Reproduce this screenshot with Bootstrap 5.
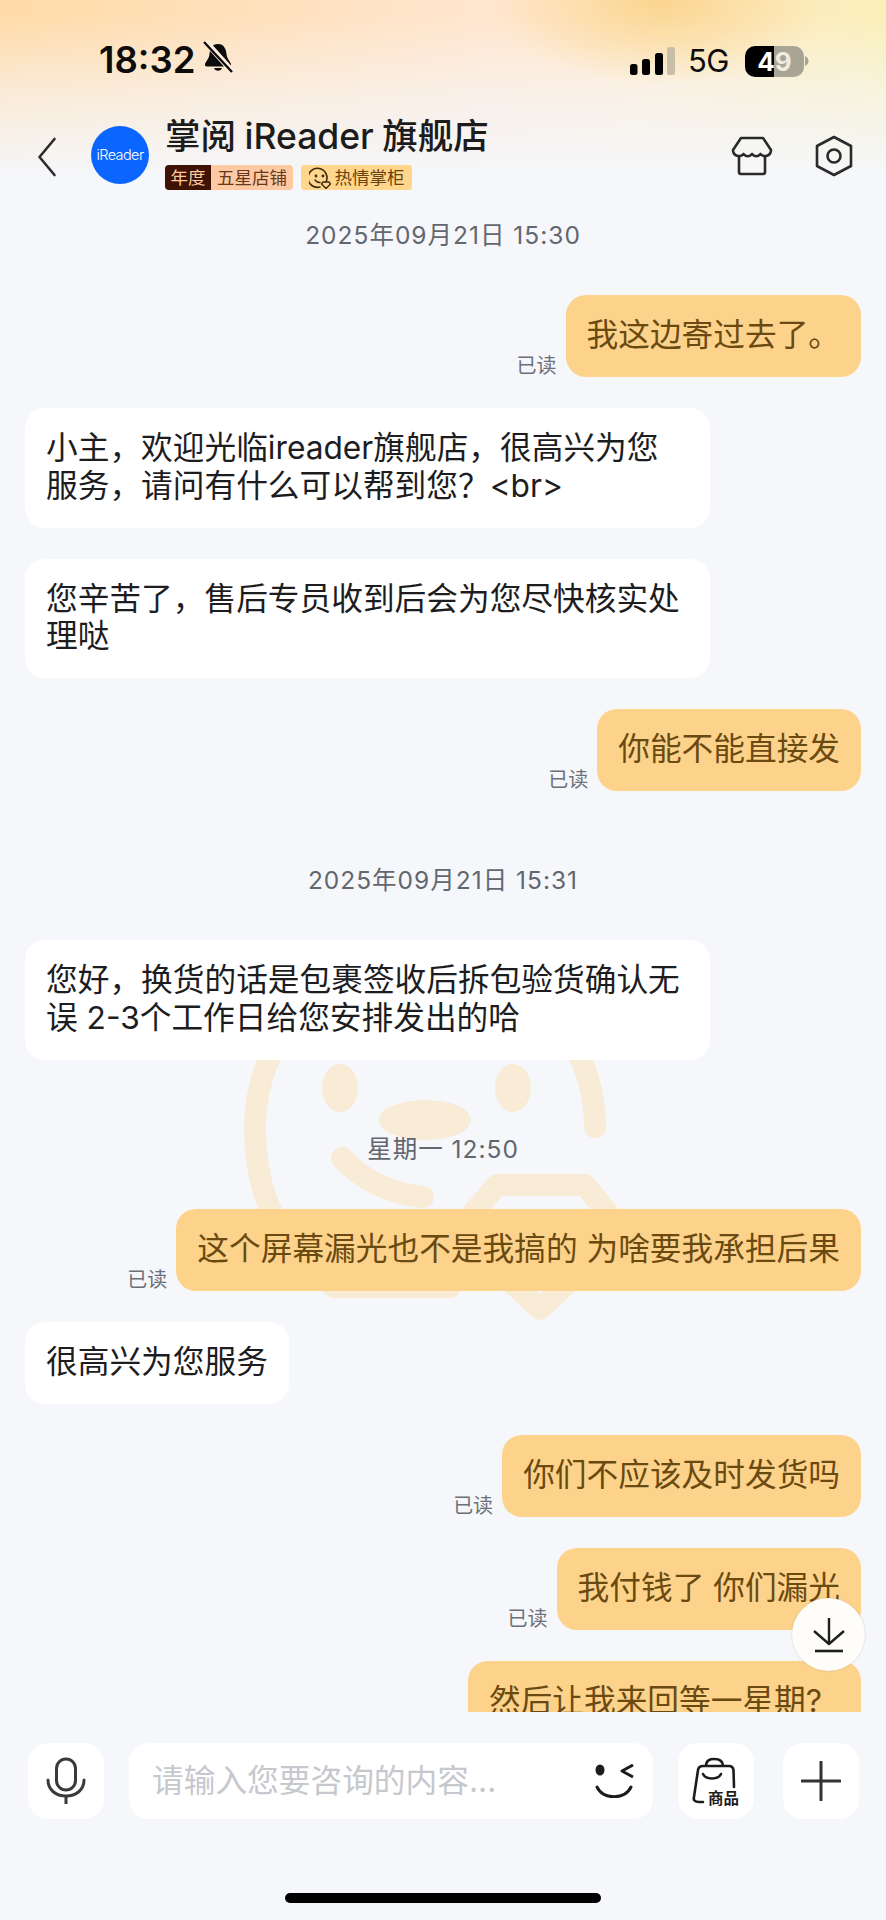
<!DOCTYPE html>
<html lang="zh-CN">

<head>
    <meta charset="UTF-8">
    <title>掌阅 iReader 旗舰店</title>
    <meta name="viewport" content="width=device-width, initial-scale=1">
    <link href="https://cdn.jsdelivr.net/npm/bootstrap@5.3.0/dist/css/bootstrap.min.css" rel="stylesheet">
    <style>
        body { margin: 0; background: #f5f7fb; font-family: Inter, "Noto Sans CJK SC", sans-serif; }
        .screen { width: 886px; height: 1920px; overflow: hidden; position: relative; background: #f5f7fb; }
        .top-glow {
            height: 203px;
            background:
                radial-gradient(ellipse 170px 85px at 660px 0, rgba(251,212,140,.95) 0, rgba(251,212,140,0) 100%),
                linear-gradient(to bottom, rgba(245,247,251,0) 8%, rgba(245,247,251,.55) 45%, #f5f7fb 88%),
                linear-gradient(to right, #ffdba8 0, #ffe6cf 55%, #ffeacc 72%, #faefb9 100%);
        }
        .status-row { height: 118px; padding: 41px 77px 0 99px; }
        .clock { font-size: 36.5px; font-weight: 600; line-height: 38px; color: #0c0c0c; width: 100px; }
        .signal-ic { margin: 4px 12px 0 0; }
        .net { font-size: 31px; line-height: 32px; color: #0c0c0c; width: 42px; letter-spacing: -.5px; }
        .batt { width: 59px; height: 31px; border-radius: 10px; background: linear-gradient(to right, #000 50%, #a8a597 50%); font-size: 26px; font-weight: 700; line-height: 31px; text-align: center; margin-left: 15px; }
        .batt b { color: #fff; font-weight: 700; }
        .batt i { color: #efece0; font-style: normal; }
        .head-row { height: 85px; padding: 0 32px 0 37px; }
        .back-ic { margin-top: 19px; }
        .shop-logo { width: 58px; height: 58px; border-radius: 50%; background: #0a66ff; color: #fff; font-size: 14.5px; letter-spacing: -.6px; font-weight: 300; margin-left: 34px; }
        .shop-name { font-size: 35.5px; font-weight: 500; line-height: 38px; color: #1c1c1c; white-space: nowrap; height: 40px; word-spacing: -1px; }
        .tag-a { background: #3e1204; color: #ffcaa0; width: 46px; }
        .tag-b { background: #ffc9a3; color: #67391c; width: 82px; }
        .tag-c { background: #ffd68b; color: #67430f; width: 111px; margin-left: 8px; border-radius: 3px; }
        .tag-a, .tag-b, .tag-c { height: 25px; font-size: 17.5px; line-height: 25px; text-align: center; white-space: nowrap; }
        .tag-row { margin-top: 7px; }
        .store-ic { margin-top: 18px; }
        .gear-ic { margin: 17px 0 0 41px; }
        .chat-area { height: 1509px; padding: 0 25px; position: relative; overflow: hidden; gap: 31px; }
        .wm { position: absolute; left: 235px; top: 744px; z-index: 0; }
        .chat-area > div { position: relative; z-index: 1; flex-shrink: 0; }
        .stamp { height: 30px; line-height: 30px; font-size: 24.5px; letter-spacing: 1px; color: #62666e; text-align: center; margin: 43px 0 14px; }
        .stamp-first { margin-top: 17px; }
        .bubble { font-size: 31.7px; line-height: 37.5px; padding: 21px 21px 23.5px; border-radius: 20px; }
        .bubble-in { background: #fff; color: #1d1d1f; max-width: 685px; }
        .bubble-me { background: #fdd38b; color: #6b4a12; }
        .bubble-tail { padding-right: 39px; }
        .seen { font-size: 20px; line-height: 22px; color: #6c7078; margin-right: 9px; }
        .to-bottom { position: absolute; left: 792px; top: 1598px; width: 73px; height: 73px; border-radius: 50%; background: #fffdf9; box-shadow: 0 0 2px rgba(0,0,0,.18); z-index: 3; }
        .composer { padding: 31px 28px 0; gap: 25px; height: 150px; }
        .tool-btn { width: 76px; height: 76px; border-radius: 20px; background: #fff; flex-shrink: 0; }
        .tool-plus { margin-left: 4px; }
        .field { height: 76px; border-radius: 20px; background: #fff; padding: 0 18px 0 23px; width: 524px; flex-shrink: 0; }
        .hint { font-size: 31.7px; line-height: 40px; color: #c6c8cd; white-space: nowrap; }
        .bag-ic { overflow: visible; }
        .home-bar { position: absolute; left: 285px; top: 1893px; width: 316px; height: 10px; border-radius: 5px; background: #000; }
    </style>
</head>

<body>
    <div class="screen d-flex flex-column">
        <div class="top-glow flex-shrink-0">
            <div class="status-row d-flex align-items-start">
                <div class="clock">18:32</div>
                <svg width="30" height="32" viewBox="0 0 30 32" class="ms-1 flex-shrink-0">
                    <path d="M15 3 C21 3 23 8 23.500 13 C24 18 27 20 28 23 C28.500 25 27 25.500 25 25.500 H5 C3 25.500 1.500 25 2 23 C3 20 6 18 6.500 13 C7 8 9 3 15 3 Z" fill="#0c0c0c" />
                    <path d="M11 27 a4.200 4 0 0 0 8 0 z" fill="#0c0c0c" />
                    <path d="M1 -1 L29 30" stroke="#ffeedd" stroke-width="6" />
                    <path d="M1 1 L29 31" stroke="#0c0c0c" stroke-width="2.400" />
                </svg>
                <div class="ms-auto d-flex align-items-center gap-0">
                    <svg width="46" height="30" viewBox="0 0 46 30" class="signal-ic">
                        <rect x="0" y="18" width="7.500" height="11" rx="2.500" fill="#000" />
                        <rect x="12" y="13" width="8" height="16" rx="2.500" fill="#000" />
                        <rect x="25" y="7" width="8" height="22" rx="2.500" fill="#000" />
                        <rect x="37" y="1" width="8" height="28" rx="2.500" fill="#c9bfa8" />
                    </svg>
                    <div class="net mt-1">5G</div>
                    <div class="batt mt-1"><b>4</b><i>9</i></div>
                    <svg width="5" height="12" viewBox="0 0 5 12" class="mt-1">
                        <path d="M1 1 C3.500 2 4.500 4 4.500 6 C4.500 8 3.500 10 1 11 Z" fill="#a8a597" />
                    </svg>
                </div>
            </div>
            <div class="head-row d-flex align-items-start">
                <svg width="20" height="40" viewBox="0 0 20 40" class="flex-shrink-0 back-ic">
                    <path d="M17.500 2 L2.500 20 L17.500 38" fill="none" stroke="#2b2b2b" stroke-width="2.600" stroke-linecap="round" stroke-linejoin="round" />
                </svg>
                <div class="shop-logo d-flex align-items-center justify-content-center mt-2 flex-shrink-0">iReader</div>
                <div class="ms-3 shop-info">
                    <div class="shop-name">掌阅 iReader 旗舰店</div>
                    <div class="d-flex tag-row">
                        <div class="tag-a rounded-start-1">年度</div>
                        <div class="tag-b rounded-end-1">五星店铺</div>
                        <div class="tag-c d-flex align-items-center justify-content-center gap-1">
                            <svg width="22" height="22" viewBox="0 0 22 22">
                                <path d="M17 15 A9.500 9.500 0 1 0 11 20" fill="none" stroke="#3c2a10" stroke-width="1.600" stroke-linecap="round" />
                                <circle cx="7" cy="9" r="1.400" fill="#3c2a10" />
                                <circle cx="14" cy="9" r="1.400" fill="#3c2a10" />
                                <path d="M6 13 C7.500 15 9 15.500 11 15.500" fill="none" stroke="#3c2a10" stroke-width="1.500" stroke-linecap="round" />
                                <path d="M14 15 H20 L21.500 17 L17 21.500 L12.500 17 Z" fill="#ffd68b" stroke="#3c2a10" stroke-width="1.400" stroke-linejoin="round" />
                            </svg>
                            <span>热情掌柜</span>
                        </div>
                    </div>
                </div>
                <svg width="42" height="40" viewBox="0 0 42 40" class="flex-shrink-0 ms-auto store-ic">
                    <path d="M8 20 V36 A2 2 0 0 0 10 38 H32 A2 2 0 0 0 34 36 V20" fill="none" stroke="#2a2a2a" stroke-width="2.600" />
                    <path d="M10 2 H32 L40 14 C40 20 33 22 29.500 18 C27 21 23.500 21 21 18 C18.500 21 15 21 12.500 18 C9 22 2 20 2 14 Z" fill="none" stroke="#2a2a2a" stroke-width="2.600" stroke-linejoin="round" />
                </svg>
                <svg width="40" height="42" viewBox="0 0 40 42" class="flex-shrink-0 gear-ic">
                    <path d="M20 2 L37 11 V31 L20 40 L3 31 V11 Z" fill="none" stroke="#2a2a2a" stroke-width="2.600" stroke-linejoin="round" />
                    <circle cx="20" cy="21" r="6.500" fill="none" stroke="#2a2a2a" stroke-width="2.600" />
                </svg>
            </div>
        </div>

        <div class="chat-area d-flex flex-column flex-shrink-0">
            <svg class="wm" width="420" height="380" viewBox="0 0 420 380">
                <path d="M215 340 L100 340 C45 300 20 250 20 180 C20 90 90 10 190 10 C290 10 360 90 360 180" fill="none" stroke="#f9ecd6" stroke-width="22" stroke-linecap="round" />
                <ellipse cx="105" cy="141" rx="18" ry="24" fill="#f9ecd6" />
                <ellipse cx="278" cy="141" rx="18" ry="24" fill="#f9ecd6" />
                <ellipse cx="190" cy="173" rx="46" ry="20" fill="#f9ecd6" />
                <path d="M107 211 C130 236 160 247 188 250" fill="none" stroke="#f9ecd6" stroke-width="22" stroke-linecap="round" />
                <path d="M262 238 H350 L388 285 L305 362 L222 285 Z" fill="none" stroke="#f9ecd6" stroke-width="22" stroke-linejoin="round" />
            </svg>

            <div class="stamp stamp-first">2025年09月21日 15:30</div>
            <div class="d-flex justify-content-end align-items-end">
                <span class="seen">已读</span>
                <div class="bubble bubble-me">我这边寄过去了。</div>
            </div>
            <div class="d-flex">
                <div class="bubble bubble-in">小主，欢迎光临ireader旗舰店，很高兴为您服务，请问有什么可以帮到您？&lt;br&gt;</div>
            </div>
            <div class="d-flex">
                <div class="bubble bubble-in">您辛苦了，售后专员收到后会为您尽快核实处理哒</div>
            </div>
            <div class="d-flex justify-content-end align-items-end">
                <span class="seen">已读</span>
                <div class="bubble bubble-me">你能不能直接发</div>
            </div>
            <div class="stamp">2025年09月21日 15:31</div>
            <div class="d-flex">
                <div class="bubble bubble-in">您好，换货的话是包裹签收后拆包验货确认无误 2-3个工作日给您安排发出的哈</div>
            </div>
            <div class="stamp">星期一 12:50</div>
            <div class="d-flex justify-content-end align-items-end">
                <span class="seen">已读</span>
                <div class="bubble bubble-me">这个屏幕漏光也不是我搞的 为啥要我承担后果</div>
            </div>
            <div class="d-flex">
                <div class="bubble bubble-in">很高兴为您服务</div>
            </div>
            <div class="d-flex justify-content-end align-items-end">
                <span class="seen">已读</span>
                <div class="bubble bubble-me">你们不应该及时发货吗</div>
            </div>
            <div class="d-flex justify-content-end align-items-end">
                <span class="seen">已读</span>
                <div class="bubble bubble-me">我付钱了 你们漏光</div>
            </div>
            <div class="d-flex justify-content-end align-items-end">
                <div class="bubble bubble-me bubble-tail">然后让我来回等一星期?</div>
            </div>
        </div>

        <div class="to-bottom d-flex align-items-center justify-content-center">
            <svg width="34" height="36" viewBox="0 0 34 36">
                <path d="M17 1 V26 M2 14 L17 27 L32 14" fill="none" stroke="#1f1f1f" stroke-width="2.400" stroke-linejoin="round" />
                <path d="M3 34 H31" stroke="#1f1f1f" stroke-width="2.600" />
            </svg>
        </div>

        <div class="composer d-flex align-items-start flex-shrink-0">
            <div class="tool-btn d-flex align-items-center justify-content-center">
                <svg width="40" height="48" viewBox="0 0 40 48">
                    <rect x="10.500" y="2" width="19" height="31" rx="9.500" fill="none" stroke="#3a3a3a" stroke-width="3" />
                    <path d="M2 23 C2 33 10 39 20 39 C30 39 38 33 38 23" fill="none" stroke="#3a3a3a" stroke-width="3" stroke-linecap="round" />
                    <path d="M20 39 V47" stroke="#3a3a3a" stroke-width="3" />
                </svg>
            </div>
            <div class="field d-flex align-items-center">
                <span class="hint">请输入您要咨询的内容...</span>
                <svg width="40" height="34" viewBox="0 0 40 34" class="ms-auto flex-shrink-0">
                    <ellipse cx="5" cy="6" rx="4.500" ry="5.500" fill="#1c1c1c" />
                    <path d="M38 1 L27 7 L38 13" fill="none" stroke="#1c1c1c" stroke-width="3" stroke-linejoin="round" />
                    <path d="M2 23 C8 36 30 36 36 23" fill="none" stroke="#1c1c1c" stroke-width="3" stroke-linecap="round" />
                </svg>
            </div>
            <div class="tool-btn d-flex align-items-center justify-content-center">
                <svg width="48" height="47" viewBox="0 0 48 47" class="bag-ic">
                    <path d="M11 44 H7 C3 44 1 42 2 39 L6 12 C6.500 9 8 8 11 8 H37 C39 8 41 9 41.500 12 L42 29" fill="none" stroke="#1c1c1c" stroke-width="2.600" stroke-linecap="round" />
                    <path d="M14 8 C14 2 18 1 22 1 C28 1 31 3 31 8" fill="none" stroke="#1c1c1c" stroke-width="2.600" />
                    <path d="M11 16 C14 22 26 22 29 16" fill="none" stroke="#1c1c1c" stroke-width="2.600" stroke-linecap="round" />
                    <text x="16" y="46" font-size="15.500" font-weight="700" fill="#1c1c1c" font-family="Noto Sans CJK SC, sans-serif">商品</text>
                </svg>
            </div>
            <div class="tool-btn tool-plus d-flex align-items-center justify-content-center">
                <svg width="40" height="40" viewBox="0 0 40 40">
                    <path d="M20 1 V39 M1 20 H39" stroke="#333" stroke-width="3" stroke-linecap="round" />
                </svg>
            </div>
        </div>
        <div class="home-bar"></div>
    </div>
    <script src="https://cdn.jsdelivr.net/npm/bootstrap@5.3.0/dist/js/bootstrap.bundle.min.js"></script>
</body>

</html>
